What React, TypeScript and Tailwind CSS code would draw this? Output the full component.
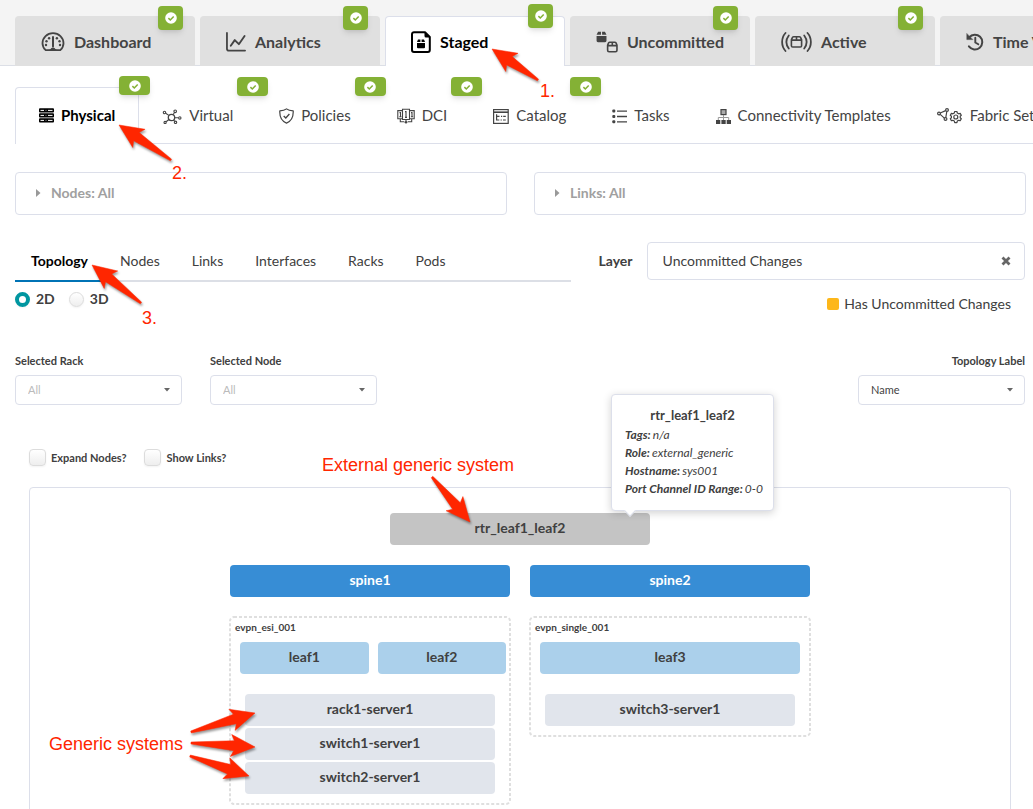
import { useState, type ReactNode } from "react";
import clsx from "clsx";

type IconProps = { className?: string };

/* ---------- icons ---------- */

function CheckCircle() {
  return (
    <svg viewBox="0 0 12 12" className="size-3" aria-hidden="true">
      <circle cx="6" cy="6" r="5.8" fill="#fff" />
      <path d="M3.4 6.1l1.9 1.9 3.4-3.6" fill="none" stroke="#84b135" strokeWidth="1.5" />
    </svg>
  );
}

function GaugeIcon({ className }: IconProps) {
  return (
    <svg viewBox="0 0 23 20" className={className} fill="none" stroke="currentColor">
      <path d="M4.2 18.2C2.2 16.4 1 13.9 1 11.3 1 5.6 5.7 1.2 11.5 1.2S22 5.6 22 11.3c0 2.6-1.2 5.1-3.2 6.9z" strokeWidth="1.8" strokeLinejoin="round" />
      <path d="M11.5 5v9.500" strokeWidth="2" strokeLinecap="round" />
      <path d="M4 19c1.300-.8 4.300-1.100 4.900-1.700a2.800 2.800 0 0 1 5.200 0c.6.6 3.600.9 4.900 1.700z" fill="currentColor" stroke="none" />
      <g fill="currentColor" stroke="none">
        <circle cx="7.600" cy="6.300" r="1.200" />
        <circle cx="15.400" cy="6.300" r="1.200" />
        <circle cx="5" cy="9.200" r="1.200" />
        <circle cx="18" cy="9.200" r="1.200" />
        <circle cx="4.500" cy="13" r="1.200" />
        <circle cx="18.500" cy="13" r="1.200" />
      </g>
    </svg>
  );
}

function ChartIcon({ className }: IconProps) {
  return (
    <svg viewBox="0 0 21 21" className={className} fill="none" stroke="currentColor" strokeLinecap="round">
      <path d="M1 1v16.500a2 2 0 0 0 2 2h17" strokeWidth="1.900" />
      <path d="M5 14.500l4.200-6 4.300 4.300 6-8.600" strokeWidth="2" strokeLinejoin="round" />
    </svg>
  );
}

function StagedIcon({ className }: IconProps) {
  return (
    <svg viewBox="0 0 20 22" className={className} fill="none" stroke="currentColor">
      <path d="M3 1.200h11l4.800 4.800v13a2 2 0 0 1-2 2H3a2 2 0 0 1-2-2V3.200a2 2 0 0 1 2-2z" strokeWidth="2" strokeLinejoin="round" />
      <path d="M13.500 1l5.500 5.600h-4a1.500 1.500 0 0 1-1.500-1.500z" fill="currentColor" stroke="none" />
      <path d="M7 8.500h2.400v2.500H6zm3.600 0H13l1 2.500h-3.400zM6 11.900h8v4.300a1 1 0 0 1-1 1H7a1 1 0 0 1-1-1z" fill="currentColor" stroke="none" />
    </svg>
  );
}

function UncommittedIcon({ className }: IconProps) {
  return (
    <svg viewBox="0 0 23 23" className={className} fill="none" stroke="currentColor">
      <path d="M2.200.8h3V4H.6zM6.400.8h3L11 4H6.400zM.6 5.200H11v5a1.500 1.500 0 0 1-1.500 1.500H2.100a1.500 1.500 0 0 1-1.500-1.500z" fill="currentColor" stroke="none" />
      <path d="M14.500 11.700h5.200c.6 0 1 .2 1.300.8l1 2.300v5.400c0 .9-.6 1.500-1.500 1.500h-6.800c-.9 0-1.500-.6-1.500-1.500v-5.400l1-2.300c.3-.6.700-.8 1.300-.8zM12.200 15.300H22M17.100 11.700v3.600" strokeWidth="1.700" />
    </svg>
  );
}

function ActiveIcon({ className }: IconProps) {
  return (
    <svg viewBox="0 0 31 20" className={className} fill="none" stroke="currentColor" strokeLinecap="round">
      <path d="M4.500 1c-4.500 5-4.500 13 0 18M26.500 1c4.500 5 4.500 13 0 18" strokeWidth="1.800" />
      <path d="M7.800 3.500c-3 4-3 9 0 13M23.200 3.500c3 4 3 9 0 13" strokeWidth="1.800" />
      <path d="M12.700 4.700h5.600c.5 0 .9.200 1.200.7l1.100 2.300v6c0 .8-.6 1.300-1.300 1.300h-7.600c-.8 0-1.300-.5-1.300-1.300v-6l1.100-2.300c.3-.5.700-.7 1.200-.7zM10.600 8.100h10M15.500 4.900v3" strokeWidth="1.600" />
    </svg>
  );
}

function HistoryIcon({ className }: IconProps) {
  return (
    <svg viewBox="0 0 18 18" className={className} fill="none" stroke="currentColor" strokeLinecap="round">
      <path d="M3.200 4.300a7.400 7.400 0 1 1-.3 9.100" strokeWidth="2" />
      <path d="M9.300 4.800v4.700l3 1.800" strokeWidth="1.900" />
      <path d="M.8.800v5.800h5.800z" fill="currentColor" stroke="currentColor" strokeWidth=".5" strokeLinejoin="round" />
    </svg>
  );
}

function PhysicalIcon({ className }: IconProps) {
  return (
    <svg viewBox="0 0 15 15" className={className}>
      {[0, 5, 10].map((y) => (
        <g key={y}>
          <rect x="0" y={y + 0.2} width="15" height="4.300" rx="1" fill="currentColor" />
          <path d={`M1.500 ${y + 2.400}h3.500M9 ${y + 2.400}h4.500`} stroke="#fff" strokeWidth="1" />
          <circle cx="7" cy={y + 2.400} r=".6" fill="#777" />
        </g>
      ))}
    </svg>
  );
}

function VirtualIcon({ className }: IconProps) {
  return (
    <svg viewBox="0 0 19 15" className={className} fill="none" stroke="currentColor" strokeWidth="1.100">
      <circle cx="9" cy="8.500" r="3.200" strokeWidth="1.300" />
      <circle cx="2" cy="3.500" r="1.200" />
      <circle cx="12.700" cy="2.300" r="1.300" />
      <circle cx="17.300" cy="8.900" r="1.200" />
      <circle cx="2.600" cy="13.500" r="1.100" />
      <circle cx="13" cy="13.300" r="1.200" />
      <path d="M3.200 4.200l3.100 2.200M12 3.500l-1.300 2M12.400 8.700H16M3.600 12.700l2.800-2.200M12.200 12.300l-1.200-1.200" />
    </svg>
  );
}

function ShieldIcon({ className }: IconProps) {
  return (
    <svg viewBox="0 0 15 16" className={className} fill="none" stroke="currentColor" strokeWidth="1.200">
      <path d="M7.500.9C5.900 2.200 3.600 2.800.8 2.900c-.3 6 1.700 10.200 6.700 12.200 5-2 7-6.200 6.700-12.200-2.800-.1-5.100-.7-6.700-2z" strokeLinejoin="round" />
      <path d="M4.700 8l2.100 2 3.600-4" strokeWidth="1.300" />
    </svg>
  );
}

function DciIcon({ className }: IconProps) {
  return (
    <svg viewBox="0 0 18 16" className={className} fill="none" stroke="currentColor" strokeWidth="1.100">
      <path d="M5.500 2.600H.8v8.200h4.700M12.500 2.600h4.700v8.200h-4.700M5.500 1.200h7v10.300h-7zM9 11.500v2M3.300 11v2.800h4M14.700 11v2.800h-4" />
      <path d="M8 3.600h1v5.800M8 9.400h2M2.500 4.600h1v4.200M14 4.600h1v4.200M2.300 8.800h2.200M13.900 8.800h2.200" />
      <circle cx="9" cy="14.200" r="1.300" fill="currentColor" stroke="none" />
    </svg>
  );
}

function CatalogIcon({ className }: IconProps) {
  return (
    <svg viewBox="0 0 16 15" className={className} fill="none" stroke="currentColor">
      <rect x=".6" y=".6" width="14.600" height="13.800" strokeWidth="1.200" />
      <path d="M.6 3.200h14.600" strokeWidth="1.600" />
      <path d="M3.600 5.300v5.700h2.700M3.600 7.300h2.900M8 7.300h1.200M10.200 7.300h2.600M7.600 11h1.200M10 11h2.800" strokeWidth="1.200" />
    </svg>
  );
}

function TasksIcon({ className }: IconProps) {
  return (
    <svg viewBox="0 0 15 15" className={className} stroke="currentColor" strokeWidth="1.300">
      <path d="M5 2.200h10M5 7.500h10M5 12.800h10" />
      <g fill="currentColor" stroke="none">
        <rect x=".3" y=".6" width="3" height="3" rx="1" />
        <rect x=".3" y="6" width="3" height="3" rx="1" />
        <rect x=".3" y="11.300" width="3" height="3" rx="1" />
      </g>
    </svg>
  );
}

function TemplatesIcon({ className }: IconProps) {
  return (
    <svg viewBox="0 0 15 15" className={className} fill="none" stroke="currentColor">
      <rect x="5" y=".6" width="5" height="5" fill="#aaa" strokeWidth="1.200" />
      <path d="M7.500 6v5M2.300 11V8.500h10.400V11" stroke="#999" />
      <path d="M0 11h4.300v4H0zM5.400 11h4.300v4H5.400zM10.700 11H15v4h-4.300z" fill="currentColor" stroke="none" />
    </svg>
  );
}

function FabricIcon({ className }: IconProps) {
  return (
    <svg viewBox="0 0 26 16" className={className} fill="none" stroke="currentColor" strokeWidth="1.200">
      <circle cx="2" cy="5.500" r="1.400" />
      <circle cx="10" cy="2" r="1.400" />
      <circle cx="8.500" cy="11" r="1.400" />
      <path d="M3.300 5l5.300-2.400M3.200 6.400l4.200 3.700M9.800 3.500l-1 6" />
      <circle cx="18.800" cy="9" r="2" />
      <path d="M17.700 3.500h2.200l.4 1.500 1.400.8 1.500-.4 1.100 1.900-1.100 1v1.500l1.100 1-1.100 1.900-1.500-.4-1.400.8-.4 1.500h-2.200l-.4-1.500-1.400-.8-1.500.4-1.100-1.900 1.100-1V8.300l-1.100-1 1.100-1.900 1.500.4 1.400-.8z" strokeLinejoin="round" />
    </svg>
  );
}

/* ---------- data ---------- */

const mainTabs = [
  { label: "Dashboard", icon: <GaugeIcon className="h-5 w-6" />, synced: true },
  { label: "Analytics", icon: <ChartIcon className="size-5" />, synced: true },
  { label: "Staged", icon: <StagedIcon className="h-[22px] w-5" />, synced: true },
  { label: "Uncommitted", icon: <UncommittedIcon className="size-6" />, synced: true },
  { label: "Active", icon: <ActiveIcon className="h-5 w-[31px]" />, synced: true },
  { label: "Time Voyager", icon: <HistoryIcon className="size-[18px]" />, synced: false },
];

const subTabs = [
  { label: "Physical", icon: <PhysicalIcon className="size-[15px]" />, synced: true },
  { label: "Virtual", icon: <VirtualIcon className="h-[15px] w-5" />, synced: true },
  { label: "Policies", icon: <ShieldIcon className="h-4 w-[15px]" />, synced: true },
  { label: "DCI", icon: <DciIcon className="h-4 w-[18px]" />, synced: true },
  { label: "Catalog", icon: <CatalogIcon className="h-[15px] w-4" />, synced: true },
  { label: "Tasks", icon: <TasksIcon className="size-[15px]" />, synced: false },
  { label: "Connectivity Templates", icon: <TemplatesIcon className="size-[15px]" />, synced: false },
  { label: "Fabric Settings", icon: <FabricIcon className="h-4 w-[26px]" />, synced: false },
];

const viewTabs = ["Topology", "Nodes", "Links", "Interfaces", "Racks", "Pods"];

const racks = [
  { name: "evpn_esi_001", leafs: ["leaf1", "leaf2"], servers: ["rack1-server1", "switch1-server1", "switch2-server1"] },
  { name: "evpn_single_001", leafs: ["leaf3"], servers: ["switch3-server1"] },
];

/* ---------- pieces ---------- */

function MainNav() {
  const [active, setActive] = useState("Staged");
  return (
    <nav className="flex h-[66px] gap-[5px] border-b border-[#dcdfe6] bg-[#f4f4f4] pt-4 pl-[15px]">
      {mainTabs.map((tab) => {
        const current = tab.label === active;
        return (
          <button
            key={tab.label}
            type="button"
            onClick={() => setActive(tab.label)}
            className={clsx(
              "relative -mb-px flex w-[180px] shrink-0 items-center gap-[9px] rounded-t border border-b-0 px-[25px] pt-px text-base font-bold whitespace-nowrap",
              current ? "border-[#dcdfea] bg-white text-black" : "border-[#e0e0e0] bg-[#e0e0e0] text-[#444]",
            )}
          >
            {tab.icon}
            {tab.label}
            {tab.synced && (
              <span
                className={clsx(
                  "absolute right-[11px] flex h-6 w-[25px] items-center justify-center rounded bg-[#84b135] shadow-md",
                  current ? "-top-[13px]" : "-top-[11px]",
                )}
              >
                <CheckCircle />
              </span>
            )}
          </button>
        );
      })}
    </nav>
  );
}

function SubNav() {
  const [active, setActive] = useState("Physical");
  return (
    <nav className="mt-[21px] ml-[15px] flex h-[57px] border-b border-[#dcdfea]">
      {subTabs.map((tab) => {
        const current = tab.label === active;
        return (
          <button
            key={tab.label}
            type="button"
            onClick={() => setActive(tab.label)}
            className={clsx(
              "relative flex shrink-0 items-center gap-[7px] px-[23px] text-[15px] whitespace-nowrap",
              current
                ? "-mb-px rounded-t border border-b-0 border-[#dcdfea] bg-white pb-px font-bold text-black"
                : "pt-[2px] text-[#444]",
            )}
          >
            {tab.icon}
            {tab.label}
            {tab.synced && (
              <span
                className={clsx(
                  "absolute -right-3 flex h-[19px] w-[31px] items-center justify-center rounded bg-[#84b135] shadow-md",
                  current ? "-top-3" : "-top-[10px]",
                )}
              >
                <CheckCircle />
              </span>
            )}
          </button>
        );
      })}
    </nav>
  );
}

function FilterPanel({ children }: { children: ReactNode }) {
  return (
    <button
      type="button"
      className="flex h-[43px] items-center gap-[10px] rounded border border-[#dcdfea] px-[19px] pb-[2px] text-left text-sm font-bold text-[#a0a0a0]"
    >
      <svg viewBox="0 0 6 8" className="h-2 w-[6px]" aria-hidden="true">
        <path d="M1 0l4.500 4L1 8z" fill="#999" />
      </svg>
      {children}
    </button>
  );
}

function SmallSelect({ id, label, value, muted }: { id: string; label: string; value: string; muted?: boolean }) {
  return (
    <div className={clsx("flex w-[167px] flex-col gap-[6px]", !muted && "ml-auto")}>
      <label htmlFor={id} className={clsx("text-[11px] leading-4 font-bold", !muted && "text-right")}>
        {label}
      </label>
      <div className="relative">
        <select
          id={id}
          className={clsx(
            "h-[30px] w-full appearance-none rounded border border-[#dcdfea] bg-white px-3 text-[11px]",
            muted ? "text-[#bbb]" : "text-[#444]",
          )}
        >
          <option>{value}</option>
        </select>
        <svg viewBox="0 0 6 4" className="pointer-events-none absolute top-[13px] right-3 h-1 w-[6px]" aria-hidden="true">
          <path d="M0 0h6L3 3.600z" fill="#666" />
        </svg>
      </div>
    </div>
  );
}

function Checkbox({ label }: { label: string }) {
  return (
    <label className="flex items-center gap-[5px] text-[11px] leading-4 font-bold">
      <input
        type="checkbox"
        className="size-[17px] appearance-none rounded border border-[#dcdcdc] bg-linear-to-b from-white to-[#eeeeee] shadow-xs checked:bg-[#0096a0]"
      />
      {label}
    </label>
  );
}

function NodeBox({ className, children }: { className: string; children: ReactNode }) {
  return (
    <div className={clsx("h-8 rounded text-center text-sm leading-[30px] font-bold", className)}>{children}</div>
  );
}

function NodeTooltip() {
  return (
    <div
      role="tooltip"
      className="absolute bottom-full left-[221px] mb-[2px] w-[163px] rounded border border-[#dcdfea] bg-white px-[13px] pt-[10px] pb-3 text-left shadow-[0_2px_8px_rgba(0,0,0,0.18)]"
    >
      <p className="mb-px text-center text-[13px] leading-5 font-bold">rtr_leaf1_leaf2</p>
      <dl className="text-xs leading-[18px] whitespace-nowrap italic">
        {[
          ["Tags:", "n/a"],
          ["Role:", "external_generic"],
          ["Hostname:", "sys001"],
          ["Port Channel ID Range:", "0-0"],
        ].map(([term, value]) => (
          <div key={term} className="flex gap-[2px]">
            <dt className="font-bold">{term}</dt>
            <dd>{value}</dd>
          </div>
        ))}
      </dl>
      <span className="absolute -bottom-[5px] left-[14px] size-2 rotate-45 border-r border-b border-[#dcdfea] bg-white" />
    </div>
  );
}

function RackBox({ name, leafs, servers }: (typeof racks)[number]) {
  return (
    <div className="relative px-[11px] pt-[2px] pb-[11px]">
      <svg className="absolute inset-0 size-full" aria-hidden="true">
        <rect
          x="1"
          y="1"
          rx="4"
          className="h-[calc(100%-2px)] w-[calc(100%-2px)]"
          fill="none"
          stroke="#dfdfdf"
          strokeWidth="2"
          strokeDasharray="3 2"
        />
      </svg>
      <p className="mb-[6px] -ml-[5px] text-[10px] leading-[18px] font-bold">{name}</p>
      <div className={clsx("flex gap-[9px]", leafs.length > 1 && "-mr-[6px]")}>
        {leafs.map((leaf) => (
          <NodeBox key={leaf} className="relative flex-1 bg-[#abd0eb]">
            {leaf}
          </NodeBox>
        ))}
      </div>
      <div className="mx-[5px] mt-5 flex flex-col gap-[2px]">
        {servers.map((server) => (
          <NodeBox key={server} className="bg-[#e1e5ec]">
            {server}
          </NodeBox>
        ))}
      </div>
    </div>
  );
}

function Topology() {
  return (
    <section className="mx-[14px] mt-[21px] rounded border border-[#dcdfea] pt-[25px] pb-16">
      <div className="mx-auto w-[580px]">
        <div className="relative mx-auto w-[260px]">
          <NodeBox className="bg-[#c4c4c4]">rtr_leaf1_leaf2</NodeBox>
          <NodeTooltip />
        </div>
        <div className="mt-5 grid grid-cols-2 gap-5">
          <NodeBox className="bg-[#378dd5] text-white">spine1</NodeBox>
          <NodeBox className="bg-[#378dd5] text-white">spine2</NodeBox>
        </div>
        <div className="-mx-px mt-[19px] grid grid-cols-2 items-start gap-[18px]">
          {racks.map((rack) => (
            <RackBox key={rack.name} {...rack} />
          ))}
        </div>
      </div>
    </section>
  );
}

/* ---------- callouts ---------- */

type Point = [number, number];

const arrows: { from: Point; to: Point }[] = [
  { from: [538, 80], to: [492, 49] },
  { from: [171, 160], to: [119, 125] },
  { from: [141, 303], to: [92, 265] },
  { from: [432, 477], to: [470, 522] },
  { from: [191, 732], to: [255, 713] },
  { from: [191, 743], to: [255, 747] },
  { from: [190, 756], to: [249, 776] },
];

// tapered shaft with a swept back head
function arrowPoints(from: Point, to: Point) {
  const len = Math.hypot(from[0] - to[0], from[1] - to[1]);
  const ux = (from[0] - to[0]) / len;
  const uy = (from[1] - to[1]) / len;
  const shape: Point[] = [[0, 0], [24, -11], [21, -5], [len, -1], [len, 1], [21, 5], [24, 11]];
  return shape.map(([a, b]) => `${to[0] + a * ux - b * uy},${to[1] + a * uy + b * ux}`).join(" ");
}

function Callouts() {
  return (
    <div className="pointer-events-none absolute inset-0 font-['Liberation_Sans',sans-serif] text-lg leading-5 whitespace-nowrap text-[#ff2600]">
      <svg width="600" height="809" className="absolute top-0 left-0 drop-shadow-[1px_2px_1px_rgba(0,0,0,0.4)]" aria-hidden="true">
        {arrows.map((a) => (
          <polygon key={a.to.join()} points={arrowPoints(a.from, a.to)} fill="#ff2600" stroke="#ff2600" strokeWidth=".5" strokeLinejoin="round" />
        ))}
      </svg>
      <span className="absolute top-[81px] left-[540px]">1.</span>
      <span className="absolute top-[163px] left-[172px]">2.</span>
      <span className="absolute top-[308px] left-[142px]">3.</span>
      <span className="absolute top-[455px] left-[322px]">External generic system</span>
      <span className="absolute top-[734px] left-[49px]">Generic systems</span>
    </div>
  );
}

export default function App() {
  const [view, setView] = useState("Topology");
  const [mode, setMode] = useState("2D");

  return (
    <div className="relative h-screen overflow-hidden bg-white font-[Lato,sans-serif] text-sm text-[#404040]">
      <MainNav />
      <SubNav />

      <main className="mt-7 pr-2 pl-[15px]">
        <div className="-mr-px grid grid-cols-2 gap-[27px]">
          <FilterPanel>Nodes: All</FilterPanel>
          <FilterPanel>Links: All</FilterPanel>
        </div>

        <div className="mt-[27px] flex items-start">
          <nav className="flex h-10 w-[55%] border-b-2 border-[#dcdfe6]">
            {viewTabs.map((tab) => (
              <button
                key={tab}
                type="button"
                onClick={() => setView(tab)}
                className={clsx(
                  "-mb-[2px] border-b-2 px-4",
                  tab === view ? "border-[#0073b5] font-bold text-black" : "border-transparent",
                )}
              >
                {tab}
              </button>
            ))}
          </nav>
          <label htmlFor="layer" className="mr-[14px] ml-7 leading-[38px] font-bold">
            Layer
          </label>
          <div className="relative flex-1">
            <select
              id="layer"
              className="h-[38px] w-full appearance-none rounded border border-[#dcdfea] bg-white px-[15px] text-[#404040]"
            >
              <option>Uncommitted Changes</option>
            </select>
            <button type="button" aria-label="Clear layer" className="absolute top-[14px] right-[14px] text-[#666]">
              <svg viewBox="0 0 10 10" className="size-[10px]" aria-hidden="true">
                <path d="M1.500 1.500l7 7M8.500 1.500l-7 7" stroke="currentColor" strokeWidth="2.800" />
              </svg>
            </button>
          </div>
        </div>

        <div className="flex h-8 items-start justify-between">
          <div className="flex gap-[14px] pt-[7px] leading-5 font-bold">
            {["2D", "3D"].map((m) => (
              <label key={m} className="flex items-center gap-[6px]">
                <input
                  type="radio"
                  name="mode"
                  checked={mode === m}
                  onChange={() => setMode(m)}
                  className="size-[15px] appearance-none rounded-full border border-[#dcdcdc] bg-linear-to-b from-white to-[#eeeeee] shadow-xs checked:border-4 checked:border-[#0096a0] checked:from-white checked:to-white"
                />
                {m}
              </label>
            ))}
          </div>
          <div className="mr-[14px] flex items-center gap-[5px] pt-3 leading-5">
            <span className="size-3 rounded-xs bg-[#fdb71a]" />
            Has Uncommitted Changes
          </div>
        </div>

        <div className="mt-[39px] flex gap-7">
          <SmallSelect id="rack" label="Selected Rack" value="All" muted />
          <SmallSelect id="node" label="Selected Node" value="All" muted />
          <SmallSelect id="label" label="Topology Label" value="Name" />
        </div>

        <div className="mt-11 ml-[14px] flex gap-[18px]">
          <Checkbox label="Expand Nodes?" />
          <Checkbox label="Show Links?" />
        </div>

        <Topology />
      </main>

      <Callouts />
    </div>
  );
}
